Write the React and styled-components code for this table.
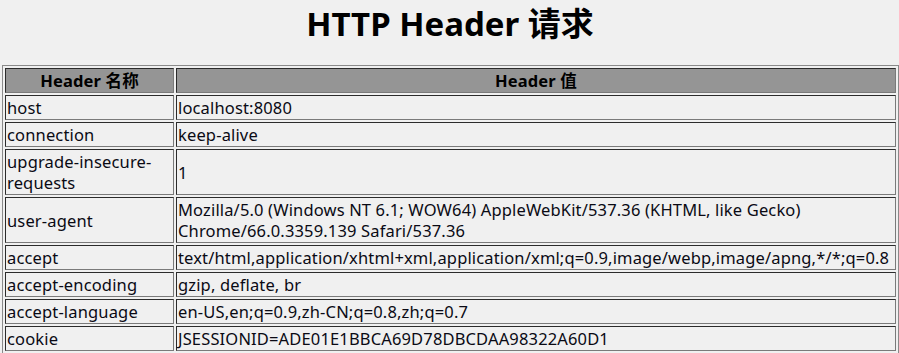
import React from "react";
import styled, { createGlobalStyle } from "styled-components";

const GlobalStyle = createGlobalStyle`
  html, body {
    margin: 0;
    padding: 0;
    background: #f0f0f0;
  }
  body {
    font-family: "Noto Sans", "Noto Sans CJK SC", sans-serif;
    color: #000;
  }
`;

const Page = styled.div`
  padding: 0 1px 0 2px;
`;

const Title = styled.h1`
  margin: 0 0 18px;
  height: 47px;
  line-height: 47px;
  text-align: center;
  font-size: 33px;
  font-weight: 700;
  font-family: "Noto Sans", "Noto Sans CJK SC", sans-serif;
`;

const Table = styled.table`
  width: 897px;
  border-collapse: separate;
  border-spacing: 2px;
  border: 1px solid #8a8a8a;
  font-size: 16.5px;
  letter-spacing: 0.15px;
`;

const HeadCell = styled.th`
  background: #959595;
  font-weight: 700;
  text-align: center;
  padding: 1px;
  height: 21px;
  line-height: 21px;
  border-style: solid;
  border-width: 1px;
  border-color: #2b2b2b #7a7a7a #7a7a7a #2b2b2b;
  width: ${(p) => p.$width || "auto"};
`;

const Cell = styled.td`
  padding: 1px;
  line-height: 21px;
  vertical-align: middle;
  border-style: solid;
  border-width: 1px;
  border-color: #2b2b2b #7a7a7a #7a7a7a #2b2b2b;
  color: #0a0a14;
`;

const rows = [
  ["host", "localhost:8080"],
  ["connection", "keep-alive"],
  ["upgrade-insecure-requests", "1"],
  [
    "user-agent",
    "Mozilla/5.0 (Windows NT 6.1; WOW64) AppleWebKit/537.36 (KHTML, like Gecko) Chrome/66.0.3359.139 Safari/537.36",
  ],
  [
    "accept",
    "text/html,application/xhtml+xml,application/xml;q=0.9,image/webp,image/apng,*/*;q=0.8",
  ],
  ["accept-encoding", "gzip, deflate, br"],
  ["accept-language", "en-US,en;q=0.9,zh-CN;q=0.8,zh;q=0.7"],
  ["cookie", "JSESSIONID=ADE01E1BBCA69D78DBCDAA98322A60D1"],
];

export default function App() {
  return (
    <Page>
      <GlobalStyle />
      <Title>HTTP Header 请求</Title>
      <Table>
        <thead>
          <tr>
            <HeadCell $width="165px">Header 名称</HeadCell>
            <HeadCell>Header 值</HeadCell>
          </tr>
        </thead>
        <tbody>
          {rows.map(([name, value]) => (
            <tr key={name}>
              <Cell>{name}</Cell>
              <Cell>{value}</Cell>
            </tr>
          ))}
        </tbody>
      </Table>
    </Page>
  );
}
